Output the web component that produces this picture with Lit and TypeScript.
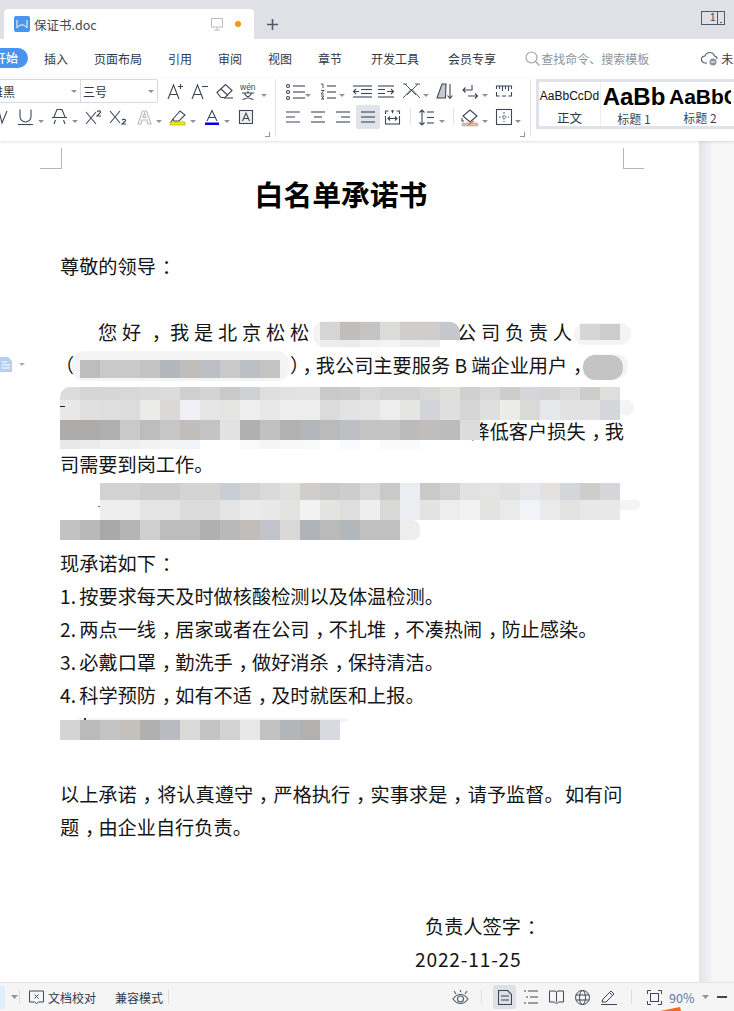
import { LitElement, html, css } from "lit";
import { customElement } from "lit/decorators.js";

const ic = (w: number, h: number, body: string) => ({ w, h, body });
const S = "#3d4757";
const chev = ic(6, 3, `<path d="M0 0h6L3 3z" fill="#8d939d" stroke="none"/>`);

const lines = (ys: number[], x1: number, x2: number) => ys.map((y) => `<path d="M${x1} ${y}H${x2}"/>`).join("");

const iconMap: Record<string, { w: number; h: number; body: string }> = {
  aplus: ic(16, 16, `<path d="M1 16 6.500 2 12 16M3 11.500h7"/><path d="M11 3.500h5M13.500 1v5"/>`),
  aminus: ic(17, 16, `<path d="M1 16 6.500 2 12 16M3 11.500h7"/><path d="M11 3.500h6"/>`),
  eraser: ic(17, 16, `<path d="M1 9.500 9.500 1.500l6.500 6-7 7H5z"/><path d="M5 6l7 6.500"/><path d="M8 15h9"/>`),
  wen: ic(17, 17, `<text x="0" y="7" font-size="8.500" font-family="Liberation Sans" fill="${S}" stroke="none">wén</text><path d="M8 8v1.500M2 10h12M4.500 10.500q3 5 9 6M11.500 10.500q-3 5-9 6"/>`),
  v: ic(8, 14, `<path d="M-1 1 2 13 7 1"/>`),
  under: ic(15, 16, `<path d="M2 .5v7a5.500 5.500 0 0 0 11 0V.5"/><path d="M0 15.500h15"/>`),
  strike: ic(15, 16, `<path d="M2 8 5 .5h5L13 8M2 15l1.500-4M13 15l-1.500-4"/><path d="M0 8.500h15"/>`),
  sup: ic(16, 15, `<path d="M0 2l10 12M10 2 0 14"/><path d="M11 1.500c1-1 4-1 3.500 1L11 6h4"/>`),
  sub: ic(17, 15, `<path d="M0 1l10 12M10 1 0 13"/><path d="M12 10c1-1 4-1 3.500 1L12 14h4"/>`),
  ghosta: ic(15, 14, `<path d="M1 14 5.500 1h4L14 14h-3L10 10H5l-1 4zM6 7.500h3L7.500 3z" stroke="#b9bcc2"/>`),
  marker: ic(16, 15, `<path d="M3 9 10 1l5 4-6 6H4z"/><path d="M3 9l-2 3"/><rect x="0" y="12" width="15" height="3" fill="#f7ee00" stroke="#9f9a20" stroke-width=".6"/>`),
  ablue: ic(14, 15, `<path d="M2 11 7 .5 12 11M4 7.500h6"/><rect x="0" y="12.500" width="14" height="2.500" fill="#0000e6" stroke="none"/>`),
  abox: ic(14, 14, `<rect x=".5" y=".5" width="13" height="13" fill="#eef0f3"/><path d="M3.500 11 7 3l3.500 8M5 8.500h4"/>`),
  bullet: ic(19, 15, lines([2, 8, 14], 7, 19) + `<circle cx="2" cy="2" r="1.500"/><circle cx="2" cy="8" r="1.500"/><circle cx="2" cy="14" r="1.500"/>`),
  num: ic(20, 17, lines([3, 9, 15], 7, 16) + `<path d="M1 1h2v4M1 7.500h3L1 11h3M1 13h3L2 15l2 1H1" stroke-width=".9"/>`),
  outdent: ic(19, 13, lines([1, 12], 0, 19) + lines([4.500, 8.500], 8, 19) + `<path d="M6 6.500H0M3 4 .5 6.500 3 9"/>`),
  indent: ic(16, 13, lines([1, 12], 0, 16) + lines([4.500, 8.500], 0, 7) + `<path d="M9 6.500h7M13 4l2.500 2.500L13 9"/>`),
  cross: ic(17, 16, `<path d="M0 1h4M12 1h5M2 1l11 11M15 1 4 12M0 15 8.500 6 17 15" stroke-width=".9"/>`),
  sort: ic(16, 17, `<path d="M0 15 5 1h4l-.5 14z" fill="#c6c9ce"/><path d="M13 1v14M10.500 12.500 13 15.500l2.500-3"/>`),
  brk: ic(16, 15, `<path d="M10 1v5H1M3.500 3.500 1 6l2.500 2.500"/><path d="M6 12h10M13 9.500 15.500 12 13 14.500"/>`),
  ruler: ic(16, 13, `<path d="M.5 4v-3h15v3M.5 7v4h3M15.500 7v4h-3M3.500 1v3M6.500 1v5M9.500 1v3M12.500 1v5M6 11h4"/>`),
  al: ic(14, 12, `<path d="M0 1h14M0 6h9M0 11h14"/>`),
  ac: ic(14, 12, lines([1, 11], 0, 14) + `<path d="M3 6h8"/>`),
  ar: ic(14, 12, lines([1, 11], 0, 14) + `<path d="M5 6h9"/>`),
  aj: ic(14, 12, lines([1, 6, 11], 0, 14)),
  dist: ic(15, 15, lines([14], 0, 15) + `<path d="M.5 4V1h3M14.500 4V1h-3M6 1h3M.5 14V6M14.500 14V6M3 8.500h9M5 6.500 3 8.500l2 2M10 6.500l2 2-2 2M7.500 0v3"/>`),
  lh: ic(15, 17, `<path d="M3 1v15M.5 3.500 3 1l2.500 2.500M.5 13.500 3 16l2.500-2.500"/>` + lines([3, 8.500, 14], 8, 15)),
  shade: ic(16, 17, `<path d="M1 7 8 1l7 6-7 6z"/><path d="M0 9v3h2"/><rect x="0" y="14" width="16" height="3" rx="1" fill="#d8c4b4" stroke="#9b8f86" stroke-width=".5"/><path d="M6 16l6-4" stroke="#d9753c"/>`),
  borders: ic(16, 16, `<rect x=".5" y=".5" width="15" height="15"/><path d="M8 3v10M3 8h10" stroke-dasharray="1.500 1.500"/>`),
};

interface Tool { k: string; x: number }

const Row1A: Tool[] = [{ k: "aplus", x: 167 }, { k: "aminus", x: 191 }, { k: "eraser", x: 216 }, { k: "wen", x: 240 }, { k: "c", x: 261 }];
const Row2A: Tool[] = [{ k: "v", x: 0 }, { k: "under", x: 18 }, { k: "c", x: 38 }, { k: "strike", x: 52 }, { k: "c", x: 72 }, { k: "sup", x: 86 }, { k: "sub", x: 110 }, { k: "ghosta", x: 137 }, { k: "c", x: 156 }, { k: "marker", x: 170 }, { k: "c", x: 190 }, { k: "ablue", x: 205 }, { k: "c", x: 224 }, { k: "abox", x: 239 }];
const Row1B: Tool[] = [{ k: "bullet", x: 286 }, { k: "c", x: 305 }, { k: "num", x: 320 }, { k: "c", x: 339 }, { k: "outdent", x: 353 }, { k: "indent", x: 378 }, { k: "cross", x: 403 }, { k: "c", x: 423 }, { k: "sort", x: 437 }, { k: "brk", x: 462 }, { k: "c", x: 482 }, { k: "ruler", x: 496 }];
const Row2B: Tool[] = [{ k: "al", x: 286 }, { k: "ac", x: 311 }, { k: "ar", x: 336 }, { k: "aj", x: 361 }, { k: "dist", x: 385 }, { k: "lh", x: 419 }, { k: "c", x: 439 }, { k: "shade", x: 462 }, { k: "c", x: 482 }, { k: "borders", x: 496 }, { k: "c", x: 515 }];

const renderIcon = (k: string) => {
  const d = k === "c" ? chev : iconMap[k];
  return `<svg xmlns="http://www.w3.org/2000/svg" width="${d.w}" height="${d.h}" viewBox="0 0 ${d.w} ${d.h}" fill="none" stroke="${S}" stroke-width="1.100" overflow="visible">${d.body}</svg>`;
};

interface Block { x: number; y: number; r?: string; blob: [number, number, number, number, number]; rows: [number, string][] }
const blocks: Block[] = [
  { x: 320, y: 322, r: "0 10px 10px 0", blob: [313, 321, 146, 26, 12], rows: [
    [18, "d5d5d5 c0bdbb c4c4c4 dbdbd8 cfcecc cfcecc c4c8cc"],
    [7, "ececec ebebeb f0f1f5 f4f4f4 efefef eeeeee ffffff"]] },
  { x: 580, y: 324, blob: [574, 323, 57, 22, 11], rows: [[16, "d6d6d6 cccccc"]] },
  { x: 80, y: 360, blob: [72, 351, 217, 30, 12], rows: [
    [18, "bdbdbd c9c9c9 c9c9c9 c4c4c4 b3b6ba c0bdbb bcc0c5 c9c9c9 bcc0c5 c4c4c4"]] },
  { x: 583, y: 355, r: "12px", blob: [583, 354, 45, 25, 12], rows: [[25, "c4c4c4 c4c4c4"]] },
  { x: 60, y: 387, r: "10px 0 0 0", blob: [60, 400, 574, 15, 7], rows: [
    [13, "dcdcdc d5d5d5 d6d6d6 d8d8d8 dadada dcdcdc cfcfcf d4d4d4 c9c9c9 d0d1d5 dedede e2e2e2 e3e3e3 c9c9c9 cccbcb d8d8d8 d2d2d2 d2d2d2 d8d8d8 dfdfdc d0d0d0 d8d8d8 cecdcb d5d6da d4d4d4 dbdbdb cecdcb dededc"],
    [20, "e8e8e8 e0e0e0 dedede dddddd ebebe9 dad9d8 eff1f5 e6e6e6 e4e4e3 efefef e8e8e8 ededed ededed dbdbdb e3e3e3 e5e5e5 ecedec e5e5e3 d2d4d8 dfdfdf d6d6d6 dfdfdf ebebe9 dadad8 e6e8ec e2e2e2 e2e2e2 d5d6da"],
    [20, "aeacab aeacab b0b0b0 c9c9c9 bdbdbd c6c6c6 c0bdbb c4c4c4 e2e2e2 b0b0b0 c0c0c0 b2b2b2 b3b6ba bababa bcc0c5 c4c4c4 c4c4c4 bbbbbb c0bdbb bcbcbc dcdcdc"],
    [9, "e8e8e8 ebebeb f0f0f0 efefef f2f2f2 f2f4f6 f0f4f8 ffffff ffffff f8f9fb f5f5f5 f8f8f8 f8f9fb ffffff f8fafc ffffff f9fafc f9fafc ffffff ffffff"]] },
  { x: 100, y: 483, blob: [100, 500, 540, 10, 5], rows: [
    [17, "d2d2d2 d2d2d2 cdcdcd cdcdcd d4d4d4 d4d4d4 c9ced4 d2d2d2 dadada e0e0de cfcecc c9c9c9 cdcdcd d8d8d8 c9c9c9 ecedf2 c9c9c9 d2d2d2 e2e2e2 e4e4e4 e0e0e0 e5e7ea e3e2e0 d5d6da cecdcb d5d6da"],
    [20, "eeeeee eeeeee e4e4e4 e4e4e4 dcdcdc dcdcdc e4e4e4 ebebeb e8e8e8 e3e3e1 f2f2f2 e3e3e1 dedede eeeeee d8d8d6 ecedf1 e3e3e1 ededed f2f2f2 e3e3e1 eaeaea f0f4f8 eaeaea e3e3e1 e8e8e8 e8e8e8"]] },
  { x: 60, y: 520, r: "0 8px 8px 0", blob: [60, 520, 360, 20, 8], rows: [
    [20, "c2c2c2 b9b9b9 a9a9a9 b5b5b5 cfcfcf bdbdbd bdbdbd b0b0b0 b9b9b9 c0bdbb c0c4ca dad9d7 b0b4b8 bababa b2b7bb c0c0c0 c0c0c0 ededed"]] },
  { x: 60, y: 720, blob: [78, 718, 270, 4, 2], rows: [
    [20, "d4d4d4 bababa c4c4c4 c4c0bc b0b0b0 b8bcc2 dadad8 c4c4c4 d2d2d2 e8e8e8 c2c2c2 b2b6b9 b2b1b0 d7dae0"]] },
];

const ticks: [number, number, number, number, string][] = [
  [60, 406, 5, 1, "#222"],
  [98, 506, 2, 1, "#b5651d"],
  [84, 718, 2, 2, "#333"],
];

const tri = html`<svg width="6" height="3" viewBox="0 0 6 3"><path d="M0 0h6L3 3z" fill="#8d939d"/></svg>`;

const P = (s: string) =>
  s.split(/([，：。])/).map((part) =>
    part === "，" || part === "："
      ? html`<span class="punct">${part}</span>`
      : part === "。"
        ? html`<span class="stop">${part}</span>`
        : part
  );

@customElement("app-root")
export class AppRoot extends LitElement {
  static styles = css`
    :host { display: block; width: 734px; height: 1011px; overflow: hidden; position: relative; background: #fff;
      font-family: "Noto Sans CJK SC", "Noto Sans", sans-serif; color: #3d4757; }
    * { box-sizing: border-box; }
    .shell { display: flex; flex-direction: column; height: 1011px; }
    .tabbar { height: 39px; background: #dfe1e6; display: flex; align-items: flex-end; position: relative; flex: none; }
    .tab { margin-left: 4px; width: 250px; height: 30px; background: #fff; border-radius: 4px 4px 0 0; display: flex; align-items: center; padding: 0 0 0 10px; }
    .tab-name { margin-left: 4px; font-size: 12.500px; color: #3d4757; flex: 1; }
    .wlogo { width: 16px; height: 16px; background: #4a94ee; border-radius: 2px; display: block; }
    .dot { width: 6px; height: 6px; border-radius: 50%; background: #f09a0a; margin: 0 13px 0 11px; }
    .plus { margin: 0 0 8px 12px; display: block; }
    .wincount { position: absolute; left: 701px; top: 11px; width: 24px; height: 14px; border: 1px solid #4f5a6c; font-size: 10px; line-height: 12px; padding-left: 8px; color: #3d4757; font-family: "Liberation Sans", sans-serif; }
    .wincount i { position: absolute; right: -1px; top: -1px; width: 8px; height: 14px; border: 1px solid #4f5a6c; }
    .wincount i::after { content: ""; position: absolute; left: 2px; bottom: 1px; width: 2px; height: 1px; background: #4f5a6c; }
    .tabs { height: 39px; padding-bottom: 1px; display: flex; align-items: center; flex: none; font-size: 12px; white-space: nowrap; color: #2f3847; position: relative; }
    .tabs > span { display: block; }
    .pill { width: 40px; margin-left: -12px; height: 20px; border-radius: 10px; background: #4a94ee; color: #fff; text-align: right; padding-right: 10px; line-height: 20px; font-weight: 500; }
    .t1 { margin-left: 16px; } .t2 { margin-left: 26px; } .t3 { margin-left: 26px; } .t4 { margin-left: 26px; } .t5 { margin-left: 26px; } .t6 { margin-left: 26px; } .t7 { margin-left: 29px; } .t8 { margin-left: 29px; }
    .tabs > .search { margin-left: 29px; color: #8d939d; display: flex; align-items: center; gap: 1px; }
    .tabs > .cloud { margin-left: 52px; display: flex; align-items: center; gap: 2px; }
    .ribbon { height: 63px; position: relative; flex: none; box-shadow: 0 1px 3px rgba(0,0,0,.12); z-index: 2; background: #fff; }
    .tool { position: absolute; display: block; line-height: 0; }
    .selbox { position: absolute; left: -10px; top: 1px; width: 168px; height: 24px; border: 1px solid #d8dadf; border-radius: 2px; font-size: 12px; color: #2f3847; line-height: 21px; display: flex; }
    .sel1 { width: 90px; border-right: 1px solid #d8dadf; display: flex; overflow: hidden; white-space: nowrap; justify-content: flex-end; align-items: center; padding-right: 3px; }
    .sel1 b { font-weight: 400; margin-right: 56px; }
    .sel2 { flex: 1; padding-left: 2px; display: flex; align-items: center; justify-content: space-between; padding-right: 3px; }
    .sep { position: absolute; width: 1px; background: #e6e7ea; }
    .s-main { top: 1px; height: 58px; }
    .s-a { left: 275px; } .s-b { left: 530px; }
    .s-mini1 { left: 410px; top: 30px; height: 18px; } .s-mini2 { left: 453px; top: 30px; height: 18px; }
    .corner { position: absolute; width: 5px; height: 5px; border-right: 1px solid #8d939d; border-bottom: 1px solid #8d939d; top: 54px; }
    .c-a { left: 265px; } .c-b { left: 520px; }
    .active { position: absolute; left: 356px; top: 27px; width: 24px; height: 24px; background: #e0e3e9; border-radius: 2px; }
    .styles { position: absolute; left: 536px; top: 1px; width: 220px; height: 50px; background: #fff; border: 3px solid #dfe2e8; border-right: none; display: flex; overflow: hidden; }
    .sty { display: flex; flex-direction: column; align-items: center; flex: none; height: 44px; font-size: 12px; color: #3d4757; }
    .sty0 { width: 62px; border-right: 1px solid #eceef1; }
    .sty1 { width: 66px; }
    .sty2 { width: 66px; }
    .sample { height: 26px; white-space: nowrap; display: flex; align-items: center; font-family: "Liberation Sans", sans-serif; color: #000; }
    .s0 { font-size: 12px; color: #111; margin-top: 1px; }
    .s1 { font-size: 24px; font-weight: 700; margin-top: 2px; }
    .s2 { font-size: 21px; font-weight: 700; margin-top: 2px; width: 62px; overflow: hidden; align-self: flex-start; margin-left: 2px; }
    .slabel { line-height: 16px; margin-top: 1px; }
    .sty0 .slabel { color: #2f3847; font-size: 12.500px; }
    .body { flex: 1; min-height: 0; display: flex; position: relative; background: #fff; }
    .page { width: 699px; flex: none; position: relative; padding: 33px 0 0 60px; font-size: 19.200px; line-height: 33px; color: #151515; }
    .right-rail { flex: 1; background: linear-gradient(90deg, #e2e4ea 0, #e8e9ed 4px, #f0f1f3 11px, #f6f6f7 14px); }
    .title { font-size: 28.800px; font-weight: 700; color: #000; line-height: 40px; width: 562px; text-align: center; margin-bottom: 36px; }
    .ln { height: 33px; white-space: nowrap; }
    .punct { padding-left: .3em; letter-spacing: -.3em; }
    .first { letter-spacing: 4.800px; display: flex; gap: 143px; padding-left: 38px; }
    .first .punct { letter-spacing: calc(4.800px - .3em); }
    .pq { padding-left: 3px; letter-spacing: -6px; }
    .wide .punct { letter-spacing: calc(1.200px - .3em); }
    .wide .stop { letter-spacing: 1.200px; }
    .num { word-spacing: -1px; }
    .ln.right { width: 564px; text-align: right; }
    .pa { display: inline-block; width: 20px; text-indent: -5px; }
    .pb { margin-left: 210px; }
    .sign { padding-left: 365px; }
    .date { padding-left: 355px; letter-spacing: .8px; }
    .crop { position: absolute; width: 21px; height: 21px; top: 7px; }
    .crop-l { left: 40px; border-right: 1px solid #b5b5b5; border-bottom: 1px solid #b5b5b5; width: 22px; }
    .crop-r { left: 623px; border-left: 1px solid #b5b5b5; border-bottom: 1px solid #b5b5b5; }
    .sidedoc { position: absolute; left: 0; top: 216px; display: flex; align-items: center; gap: 7px; }
    .blob { position: absolute; background: #f4f4f5; }
    .mos { position: absolute; display: flex; flex-direction: column; overflow: hidden; }
    .mrow { display: flex; }
    .mrow i { display: block; width: 20px; height: 100%; flex: none; }
    .tick { position: absolute; }
    .status { height: 29px; flex: none; background: #f5f5f6; border-top: 1px solid #e2e3e6; position: relative; font-size: 12px; color: #2f3847; display: flex; align-items: center; white-space: nowrap; }
    .status svg { display: block; flex: none; }
    .stleft { width: 5px; height: 23px; background: #e3eefb; overflow: hidden; flex: none; }
    .stchev { margin-left: 6px; }
    .vbar { width: 1px; height: 14px; background: #dadce0; flex: none; }
    .wrapv { margin-left: 1px; }
    .proof { margin-left: 9px; }
    .t-proof { margin-left: 4px; }
    .t-comp { margin-left: 19px; }
    .v2 { margin-left: 5px; }
    .eye { margin-left: 283px; }
    .v3 { margin-left: 12px; }
    .viewon { margin-left: 11px; width: 23px; height: 24px; background: #dde0e5; border-radius: 2px; display: flex; align-items: center; justify-content: center; flex: none; }
    .st-list { margin-left: 8px; } .st-book { margin-left: 10px; } .st-globe { margin-left: 11px; } .st-pen { margin-left: 11px; }
    .v4 { margin-left: 14px; }
    .st-full { margin-left: 15px; }
    .zoom { margin-left: 7px; color: #5d7aa5; font-size: 12.500px; }
    .st-c { margin-left: 8px; }
    .minus { margin-left: 8px; width: 10px; height: 2px; background: #3d4757; flex: none; }
    .orange { position: absolute; left: 660px; top: 1006px; z-index: 5; display: block; }
  `;

  private tools(list: Tool[], center: number) {
    return list.map((t) => {
      const d = t.k === "c" ? chev : iconMap[t.k];
      const el = document.createElement("span");
      el.className = "tool";
      el.style.left = `${t.x}px`;
      el.style.top = `${center - d.h / 2}px`;
      el.innerHTML = renderIcon(t.k);
      return el;
    });
  }

  private mosaic() {
    return html`${blocks.map((b) => html`
      <div class="blob" style="left:${b.blob[0]}px;top:${b.blob[1] - 141}px;width:${b.blob[2]}px;height:${b.blob[3]}px;border-radius:${b.blob[4]}px"></div>
      <div class="mos" style="left:${b.x}px;top:${b.y - 141}px;border-radius:${b.r ?? 0}">
        ${b.rows.map(([h, cs]) => html`<div class="mrow" style="height:${h}px">${cs.split(" ").map((c) => html`<i style="background:#${c}"></i>`)}</div>`)}
      </div>`)}
      ${ticks.map(([x, y, w, h, c]) => html`<div class="tick" style="left:${x}px;top:${y - 141}px;width:${w}px;height:${h}px;background:${c}"></div>`)}`;
  }

  render() {
    return html`
      <div class="shell">
        <div class="tabbar">
          <div class="tab">
            <svg class="wlogo" viewBox="0 0 16 16"><path d="M3 4v8l3-3 2 0 2 0 3 3V4" fill="none" stroke="#fff" stroke-width="1"/></svg>
            <span class="tab-name">保证书.doc</span>
            <svg width="13" height="13" viewBox="0 0 13 13" fill="none" stroke="#b9bdc4"><rect x=".5" y=".5" width="11" height="8.500"/><path d="M6 9v3M3 12h6"/></svg>
            <span class="dot"></span>
          </div>
          <svg class="plus" width="13" height="13" viewBox="0 0 13 13" stroke="#4f5a6c" stroke-width="1.600"><path d="M6.500 1v11M1 6.500h11"/></svg>
          <div class="wincount">1<i></i></div>
        </div>
        <div class="tabs">
          <span class="pill">开始</span><span class="t1">插入</span><span class="t2">页面布局</span><span class="t3">引用</span><span class="t4">审阅</span><span class="t5">视图</span><span class="t6">章节</span><span class="t7">开发工具</span><span class="t8">会员专享</span>
          <span class="search"><svg width="15" height="15" viewBox="0 0 15 15" fill="none" stroke="#9aa0aa" stroke-width="1.100"><circle cx="6.500" cy="6.500" r="5.500"/><path d="m10.500 10.500 4 4"/></svg>查找命令、搜索模板</span>
          <span class="cloud"><svg width="18" height="15" viewBox="0 0 18 15" fill="none" stroke="#4f5a6c" stroke-width="1.100"><path d="M6 12H4a3.500 3.500 0 0 1 0-7 5 5 0 0 1 9.500 0A3 3 0 0 1 16 8"/><circle cx="12" cy="11" r="3.500" fill="#8d939d" stroke="none"/><path d="M10 11h4" stroke="#fff"/></svg>未</span>
        </div>
        <div class="ribbon">
          <div class="selbox"><div class="sel1"><b>雅黑</b>${tri}</div><div class="sel2">三号${tri}</div></div>
          <div class="active"></div>
          ${this.tools(Row1A, 13)}
          ${this.tools(Row2A, 39)}
          ${this.tools(Row1B, 13)}
          ${this.tools(Row2B, 39)}
          <div class="sep s-main s-a"></div><div class="sep s-main s-b"></div>
          <div class="sep s-mini1"></div><div class="sep s-mini2"></div>
          <div class="corner c-a"></div><div class="corner c-b"></div>
          <div class="styles">
            <div class="sty sty0"><span class="sample s0">AaBbCcDd</span><span class="slabel">正文</span></div>
            <div class="sty sty1"><span class="sample s1">AaBb</span><span class="slabel">标题 1</span></div>
            <div class="sty sty2"><span class="sample s2">AaBbC</span><span class="slabel">标题 2</span></div>
          </div>
        </div>
        <div class="body">
          <div class="page">
            <div class="title">白名单承诺书</div>
            <div class="ln">${P("尊敬的领导：")}</div>
            <div class="ln"></div>
            <div class="ln first"><span>${P("您好，我是北京松松")}</span><span>公司负责人</span></div>
            <div class="ln"><span class="pa">（</span><span class="pb">）<span class="pq">，</span>我公司主要服务 B 端企业用户${P("，")}</span></div>
            <div class="ln"></div>
            <div class="ln right">${P("降低客户损失，我")}</div>
            <div class="ln">${P("司需要到岗工作。")}</div>
            <div class="ln"></div>
            <div class="ln"></div>
            <div class="ln">${P("现承诺如下：")}</div>
            <div class="ln num">${P("1. 按要求每天及时做核酸检测以及体温检测。")}</div>
            <div class="ln num">${P("2. 两点一线，居家或者在公司，不扎堆，不凑热闹，防止感染。")}</div>
            <div class="ln num">${P("3. 必戴口罩，勤洗手，做好消杀，保持清洁。")}</div>
            <div class="ln num">${P("4. 科学预防，如有不适，及时就医和上报。")}</div>
            <div class="ln"></div>
            <div class="ln"></div>
            <div class="ln wide">${P("以上承诺，将认真遵守，严格执行，实事求是，请予监督。如有问")}</div>
            <div class="ln">${P("题，由企业自行负责。")}</div>
            <div class="ln"></div>
            <div class="ln"></div>
            <div class="ln sign">${P("负责人签字：")}</div>
            <div class="ln date">2022-11-25</div>
            ${this.mosaic()}
            <div class="crop crop-l"></div><div class="crop crop-r"></div>
            <div class="sidedoc">
              <svg width="12" height="15" viewBox="0 0 12 15"><path d="M0 0h8l4 4v11H0z" fill="#b9cfee"/><path d="M2 5h5M2 8h8M2 11h8" stroke="#fff"/></svg>
              <svg width="6" height="3" viewBox="0 0 6 3"><path d="M0 0h6L3 3z" fill="#a8adb5"/></svg>
            </div>
          </div>
          <div class="right-rail"></div>
        </div>
        <div class="status">
          <div class="stleft"></div>
          <svg class="stchev" width="7" height="4" viewBox="0 0 7 4"><path d="M0 0h7L3.500 4z" fill="#8d939d"/></svg>
          <div class="vbar wrapv"></div>
          <svg class="proof" width="15" height="14" viewBox="0 0 15 14" fill="none" stroke="#3d4757"><path d="M.5 1h14v11h-5L7.500 13.500 5.500 12h-5z"/><path d="M5.500 4.500l4 4M9.500 4.500l-4 4"/></svg>
          <span class="t-proof">文档校对</span>
          <span class="t-comp">兼容模式</span>
          <div class="vbar v2"></div>
          <svg class="eye" width="17" height="15" viewBox="0 0 17 15" fill="none" stroke="#4f5a6c" stroke-width="1.100"><path d="M1 9c4-6 11-6 15 0-4 6-11 6-15 0z"/><circle cx="8.500" cy="9" r="3"/><path d="M2 1l2 3M15 1l-2 3M8.500 0v2"/></svg>
          <div class="vbar v3"></div>
          <div class="viewon"><svg width="14" height="15" viewBox="0 0 14 15" fill="none" stroke="#3d4757" stroke-width="1.100"><path d="M.5.5h9l4 4v10H.5z"/><path d="M3 6h8M3 10h8"/></svg></div>
          <svg class="st-list" width="15" height="14" viewBox="0 0 15 14" fill="none" stroke="#3d4757"><path d="M0 1h2M4 1h10M2 7h2M6 7h8M0 13h2M4 13h10"/></svg>
          <svg class="st-book" width="15" height="15" viewBox="0 0 15 15" fill="none" stroke="#3d4757"><path d="M.5 1h5.500l1.500 1 1.500-1h5.500v11h-5l-2 2-2-2h-5zM7.500 2v10"/></svg>
          <svg class="st-globe" width="15" height="15" viewBox="0 0 15 15" fill="none" stroke="#3d4757"><circle cx="7.500" cy="7.500" r="7"/><ellipse cx="7.500" cy="7.500" rx="3" ry="7"/><path d="M1 5h13M1 10h13"/></svg>
          <svg class="st-pen" width="16" height="15" viewBox="0 0 16 15" fill="none" stroke="#3d4757"><path d="M1 12l1-3 8-8 3 3-8 8zM8.500 2.500l3 3M0 14.500h16"/></svg>
          <div class="vbar v4"></div>
          <svg class="st-full" width="15" height="15" viewBox="0 0 15 15" fill="none" stroke="#3d4757"><path d="M.5 4V.5H4M11 .5h3.500V4M14.500 11v3.500H11M4 14.500H.5V11"/><rect x="3.500" y="3.500" width="8" height="8"/></svg>
          <span class="zoom">90%</span>
          <svg class="st-c" width="7" height="4" viewBox="0 0 7 4"><path d="M0 0h7L3.500 4z" fill="#8d939d"/></svg>
          <div class="minus"></div>
        </div>
      </div>
      <svg class="orange" width="22" height="5" viewBox="0 0 22 5"><path d="M0 5 20 1l1 4z" fill="#f2672a"/></svg>
    `;
  }
}
